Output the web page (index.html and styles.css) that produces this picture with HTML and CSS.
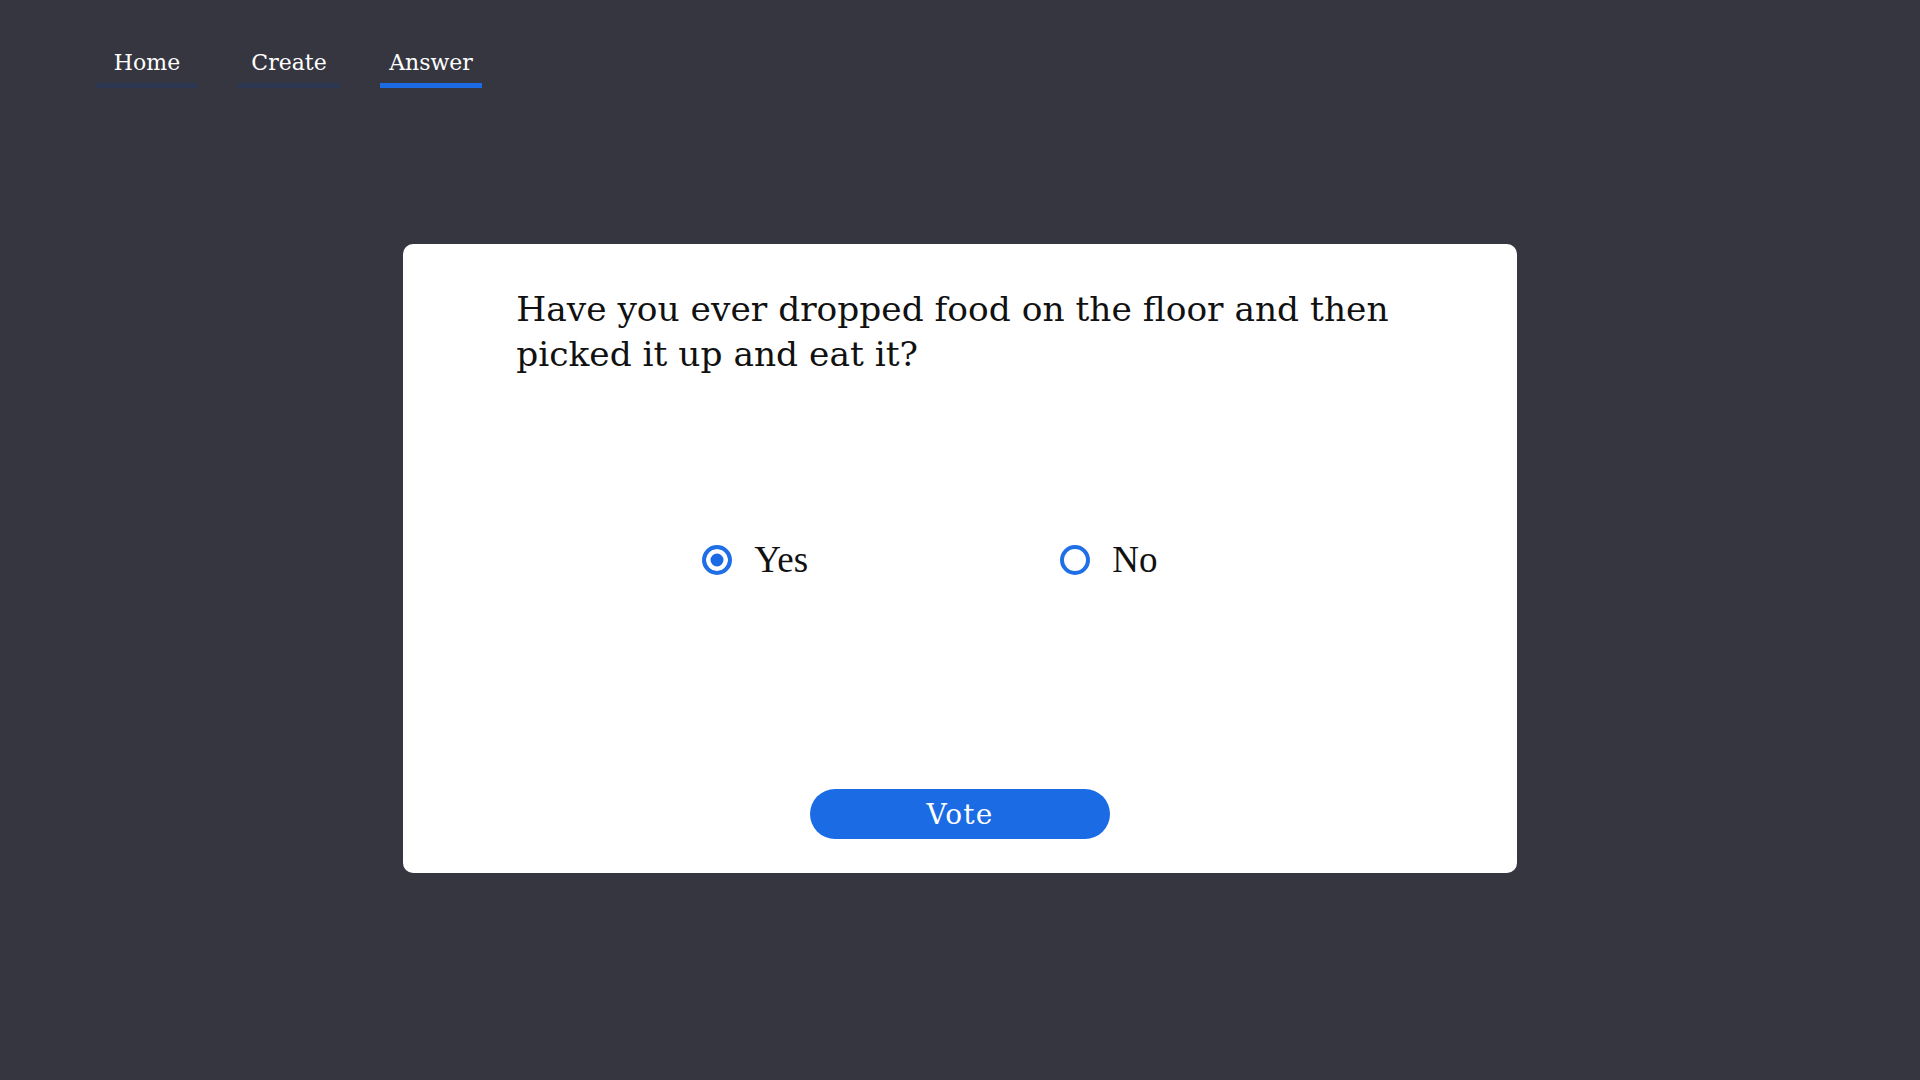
FILE: index.html
```html
<!DOCTYPE html>
<html lang="en">
<head>
<meta charset="utf-8">
<title>Answer</title>
<link rel="stylesheet" href="styles.css">
</head>
<body>
<nav class="nav">
  <a class="tab" href="#">Home</a>
  <a class="tab" href="#">Create</a>
  <a class="tab active" href="#">Answer</a>
</nav>
<main class="card">
  <h1 class="question">Have you ever dropped food on the floor and then picked it up and eat it?</h1>
  <form class="poll">
    <div class="options">
      <label class="option option-yes"><input type="radio" name="answer" value="yes" checked><span>Yes</span></label>
      <label class="option"><input type="radio" name="answer" value="no"><span>No</span></label>
    </div>
    <button class="vote" type="button">Vote</button>
  </form>
</main>
</body>
</html>
```
FILE: styles.css
```css
html, body {
  margin: 0;
  padding: 0;
  height: 100%;
}
body {
  background: #363640;
  font-family: "DejaVu Serif", Georgia, serif;
}
.nav {
  display: flex;
  gap: 40px;
  padding: 50px 0 0 96px;
}
.tab {
  display: block;
  width: 102px;
  text-align: center;
  color: #ffffff;
  text-decoration: none;
  font-size: 22px;
  line-height: 26px;
  padding-bottom: 7px;
  border-bottom: 5px solid #2c3752;
}
.tab.active {
  border-bottom-color: #1a6be4;
}
.card {
  width: 58%;
  margin: 156px auto 0;
  height: 629px;
  box-sizing: border-box;
  background: #ffffff;
  border-radius: 10px;
  padding: 43px 113px 0;
}
.question {
  margin: 0;
  font-weight: normal;
  font-size: 34.4px;
  line-height: 45px;
  color: #111111;
}
.poll {
  display: flex;
  flex-direction: column;
}
.options {
  display: flex;
  margin-top: 163px;
  padding-left: 186px;
  height: 40px;
}
.option {
  display: flex;
  align-items: center;
  gap: 22px;
  font-family: "Liberation Serif", "Times New Roman", serif;
  font-size: 37px;
  line-height: 40px;
  color: #111111;
}
.option-yes {
  width: 358px;
}
.option input {
  appearance: none;
  -webkit-appearance: none;
  margin: 0;
  width: 30px;
  height: 30px;
  box-sizing: border-box;
  border: 4px solid #1f6fe6;
  border-radius: 50%;
  background: #ffffff;
}
.option input:checked {
  background: #1a6be4;
  box-shadow: inset 0 0 0 4.5px #ffffff;
}
.vote {
  align-self: center;
  margin-top: 209px;
  width: 300px;
  height: 50px;
  border: none;
  border-radius: 25px;
  background: #1a6be4;
  color: #ffffff;
  font-family: "DejaVu Serif", Georgia, serif;
  font-size: 28px;
  letter-spacing: 1.2px;
  padding: 0;
}
```
